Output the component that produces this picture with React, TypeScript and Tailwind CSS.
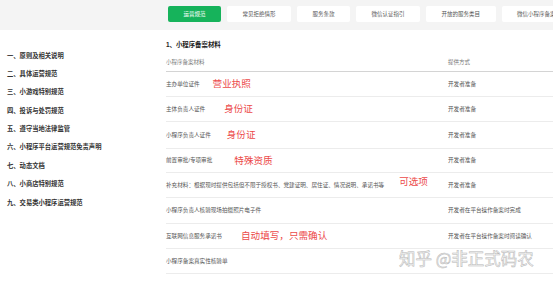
import React from "react";

const font = "font-['Liberation_Sans','Noto_Sans_CJK_SC',sans-serif]";

const tabs = [
  { label: "运营规范", active: true },
  { label: "常见拒绝情形" },
  { label: "服务条款" },
  { label: "微信认证指引" },
  { label: "开放的服务类目" },
  { label: "微信小程序备案" },
];

const side = [
  "一、原则及相关说明",
  "二、具体运营规范",
  "三、小游戏特别规范",
  "四、投诉与处罚规范",
  "五、遵守当地法律监管",
  "六、小程序平台运营规范免责声明",
  "七、动态文档",
  "八、小商店特别规范",
  "九、交易类小程序运营规范",
];

type Row = { name: string; note?: string; noteCls?: string; how: string; h: string };

const rows: Row[] = [
  { name: "主办单位证件", note: "营业执照", noteCls: "ml-[13px]", how: "开发者准备", h: "h-[24px]" },
  { name: "主体负责人证件", note: "身份证", noteCls: "ml-[19px]", how: "开发者准备", h: "h-[24px]" },
  { name: "小程序负责人证件", note: "身份证", noteCls: "ml-[16px]", how: "开发者准备", h: "h-[26px]" },
  { name: "前置审批/专项审批", note: "特殊资质", noteCls: "ml-[22px]", how: "开发者准备", h: "h-[23px]" },
  {
    name: "补充材料：根据现时提供包括但不限于授权书、党建证明、居住证、情况说明、承诺书等",
    note: "可选项",
    noteCls: "ml-[15px] -mt-[5px]",
    how: "开发者准备",
    h: "h-[24px]",
  },
  { name: "小程序负责人核验现场拍摄照片电子件", how: "开发者在平台操作备案时完成", h: "h-[25px]" },
  { name: "互联网信息服务承诺书", note: "自动填写，只需确认", noteCls: "ml-[19px]", how: "开发者在平台操作备案时阅读确认", h: "h-[24px]" },
  { name: "小程序备案真实性核验单", how: "", h: "h-[24px]" },
];

export default function App() {
  return (
    <div className={`relative w-[553px] h-[284px] overflow-hidden bg-white ${font}`}>
      <div className="h-[30px] bg-[#f4f4f4] flex items-start pt-[6px] pl-[168px] gap-[6px]">
        {tabs.map((t) => (
          <div
            key={t.label}
            className={
              t.active
                ? "shrink-0 h-[16px] px-[15.5px] rounded-[2px] bg-[#16b35b] text-white text-[5.5px] leading-[16px] whitespace-nowrap"
                : "shrink-0 h-[16px] px-[15.5px] rounded-[2px] bg-white text-[#555] text-[5.5px] leading-[16px] whitespace-nowrap"
            }
          >
            {t.label}
          </div>
        ))}
      </div>
      <div className="flex">
        <div className="w-[165px] shrink-0 pt-[16.5px] pl-[7px]">
          {side.map((s) => (
            <div key={s} className="h-[18.4px] leading-[18.4px] text-[6.3px] font-bold text-[#333] whitespace-nowrap">
              {s}
            </div>
          ))}
        </div>
        <div className="flex-1 pt-[10px] pl-[1px]">
          <div className="h-[10px] leading-[10px] text-[6.4px] font-bold text-[#222]">1、小程序备案材料</div>
          <div className="flex items-end h-[22px] pb-[4px] border-b border-[#d4d4d4] text-[5.5px] text-[#777] leading-[10px]">
            <div className="w-[282px] shrink-0">小程序备案材料</div>
            <div>提供方式</div>
          </div>
          {rows.map((r) => (
            <div key={r.name} className={`flex items-center ${r.h} border-b border-[#ececec] text-[5.6px] text-[#555] box-content`}>
              <div className="w-[282px] shrink-0 flex items-center whitespace-nowrap">
                <span>{r.name}</span>
                {r.note && (
                  <span className={`${r.noteCls} text-[9.6px] text-[#ec4a4a] leading-[12px]`}>{r.note}</span>
                )}
              </div>
              <div className="whitespace-nowrap">{r.how}</div>
            </div>
          ))}
        </div>
      </div>
      <div className="absolute left-[399px] top-[248px] text-[16.5px] leading-[20px] whitespace-nowrap text-[#f4f4f4] [-webkit-text-stroke:0.5px_#b8b8b8] font-['Noto_Sans_CJK_SC',sans-serif]">
        知乎 @非正式码农
      </div>
    </div>
  );
}
